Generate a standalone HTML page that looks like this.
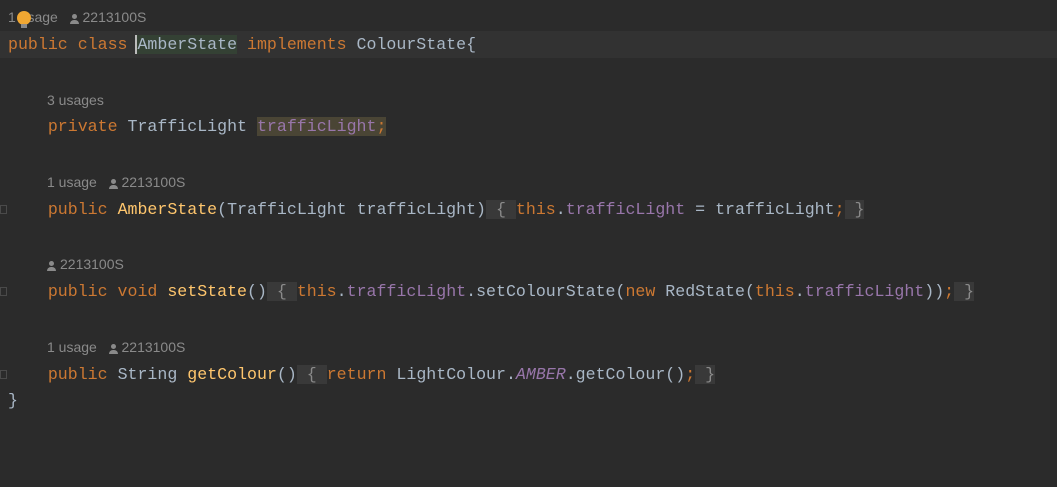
<!DOCTYPE html>
<html><head><meta charset="utf-8"><style>
body{margin:0;width:1057px;height:487px;background:#2b2b2b;overflow:hidden;position:relative}
.l{position:absolute;left:8px;font-family:"Liberation Mono",monospace;font-size:16.6px;color:#a9b7c6;white-space:pre;line-height:26px;height:26px}
.h{position:absolute;font-family:"Liberation Sans",sans-serif;font-size:14px;color:#8a8a8a;white-space:pre}
.k{color:#cc7832}.f{color:#9876aa}.m{color:#ffc66d}.i{color:#9876aa;font-style:italic}
.b{background:#393939;color:#8a8a8a}
.cur{position:absolute;left:0;top:31px;width:1057px;height:27px;background:#323232}
.fold{position:absolute;left:0;width:7px;height:9px;border:1px solid #4a4a4a;box-sizing:border-box}
.p{display:inline-block;width:9px;height:9px;vertical-align:-1px;margin-right:4px;position:relative}
.p:before{content:"";position:absolute;left:2px;top:0;width:5px;height:5px;border-radius:50%;background:#8a8a8a}
.p:after{content:"";position:absolute;left:0;top:6px;width:9px;height:4px;border-radius:4px 4px 0 0;background:#8a8a8a}
</style></head><body>
<div class="cur"></div>
<div class="h" style="left:8px;top:9px">1 usage   <span class="p"></span>2213100S</div>
<div style="position:absolute;left:17px;top:11px;width:14px;height:14px;border-radius:50%;background:#f0a732"></div>
<div style="position:absolute;left:21px;top:24px;width:6px;height:4px;background:#888"></div>
<div class="l" style="top:32px"><span class="k">public class </span><span style="background:#344134;border-left:2px solid #bbb;margin-left:-2px">AmberState</span><span class="k"> implements </span>ColourState{</div>
<div class="h" style="left:47px;top:92px">3 usages</div>
<div class="l" style="top:114px">    <span class="k">private </span>TrafficLight <span class="f" style="background:#4a4535">trafficLight</span><span class="k" style="background:#4a4535">;</span></div>
<div class="h" style="left:47px;top:174px">1 usage   <span class="p"></span>2213100S</div>
<div class="fold" style="top:205px"></div>
<div class="l" style="top:197px">    <span class="k">public </span><span class="m">AmberState</span>(TrafficLight trafficLight)<span class="b"> { </span><span class="k">this</span>.<span class="f">trafficLight</span> = trafficLight<span class="k">;</span><span class="b"> }</span></div>
<div class="h" style="left:47px;top:256px"><span class="p"></span>2213100S</div>
<div class="fold" style="top:287px"></div>
<div class="l" style="top:279px">    <span class="k">public void </span><span class="m">setState</span>()<span class="b"> { </span><span class="k">this</span>.<span class="f">trafficLight</span>.setColourState(<span class="k">new </span>RedState(<span class="k">this</span>.<span class="f">trafficLight</span>))<span class="k">;</span><span class="b"> }</span></div>
<div class="h" style="left:47px;top:339px">1 usage   <span class="p"></span>2213100S</div>
<div class="fold" style="top:370px"></div>
<div class="l" style="top:362px">    <span class="k">public </span>String <span class="m">getColour</span>()<span class="b"> { </span><span class="k">return </span>LightColour.<span class="i">AMBER</span>.getColour()<span class="k">;</span><span class="b"> }</span></div>
<div class="l" style="top:388px">}</div>
</body></html>
